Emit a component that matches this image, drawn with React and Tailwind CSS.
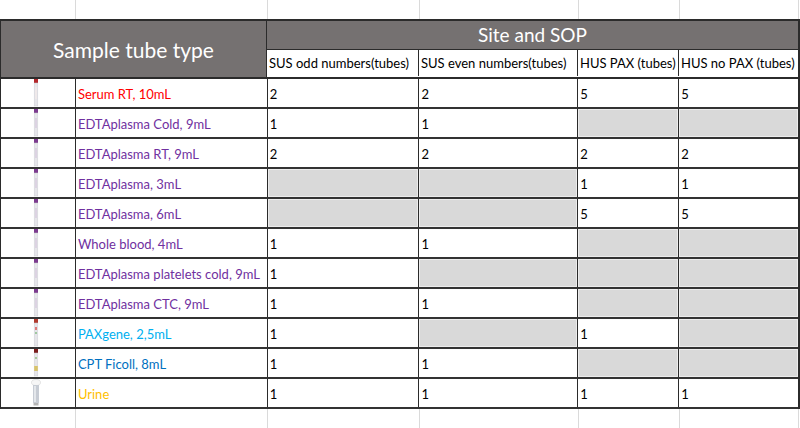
import React from 'react';

const font = { fontFamily: 'Lato, "Open Sans", sans-serif' };

const rows = [
  { name: 'Serum RT, 10mL', color: 'text-[#ff0000]', tube: 'serum', v: ['2', '2', '5', '5'] },
  { name: 'EDTAplasma Cold, 9mL', color: 'text-[#7030a0]', tube: 'edta', v: ['1', '1', null, null] },
  { name: 'EDTAplasma RT, 9mL', color: 'text-[#7030a0]', tube: 'edta', v: ['2', '2', '2', '2'] },
  { name: 'EDTAplasma, 3mL', color: 'text-[#7030a0]', tube: 'edta', v: [null, null, '1', '1'] },
  { name: 'EDTAplasma, 6mL', color: 'text-[#7030a0]', tube: 'edta', v: [null, null, '5', '5'] },
  { name: 'Whole blood, 4mL', color: 'text-[#7030a0]', tube: 'edta', v: ['1', '1', null, null] },
  { name: 'EDTAplasma platelets cold, 9mL', color: 'text-[#7030a0]', tube: 'edta', v: ['1', null, null, null] },
  { name: 'EDTAplasma CTC, 9mL', color: 'text-[#7030a0]', tube: 'edta', v: ['1', '1', null, null] },
  { name: 'PAXgene, 2,5mL', color: 'text-[#00b0f0]', tube: 'pax', v: ['1', null, '1', null] },
  { name: 'CPT Ficoll, 8mL', color: 'text-[#0070c0]', tube: 'cpt', v: ['1', '1', null, null] },
  { name: 'Urine', color: 'text-[#ffc000]', tube: 'urine', v: ['1', '1', '1', '1'] },
];

const widths = ['w-[152px]', 'w-[159px]', 'w-[101px]', 'w-[119px]'];

function Tube({ kind }) {
  if (kind === 'urine') {
    return (
      <svg width="12" height="28" viewBox="0 0 12 28">
        <ellipse cx="6" cy="3.5" rx="4.5" ry="3" fill="#f6f6f6" stroke="#d4d4d4" strokeWidth="0.6" />
        <rect x="3" y="6" width="6" height="18" fill="#c7ccd4" />
        <rect x="4" y="7" width="2" height="16" fill="#e4e7eb" />
        <rect x="3.5" y="24" width="5" height="2.5" fill="#b5b5b5" />
      </svg>
    );
  }
  const cap = { serum: '#b3262a', edta: '#7b3a8e', pax: '#b03a2e', cpt: '#7a1c1c' }[kind];
  return (
    <svg width="8" height="28" viewBox="0 0 8 28">
      <rect x="2" y="0" width="4" height="4" fill={cap} />
      <rect x="2.2" y="4" width="3.6" height="23" fill="#e6e6ea" stroke="#cdcdd3" strokeWidth="0.5" />
      {kind === 'edta' && <rect x="3" y="9" width="2" height="10" fill="#dcd3e2" />}
      {kind === 'serum' && <rect x="3" y="8" width="2" height="12" fill="#efe9ea" />}
      {kind === 'pax' && (
        <>
          <rect x="3" y="8" width="2" height="3" fill="#e07a7a" />
          <rect x="3" y="13" width="2" height="2" fill="#9fc79f" />
        </>
      )}
      {kind === 'cpt' && (
        <>
          <rect x="3" y="8" width="2" height="2" fill="#a8c89a" />
          <rect x="2.2" y="17" width="3.6" height="5" fill="#d8c36a" />
        </>
      )}
    </svg>
  );
}

function SheetRow({ h }) {
  return (
    <div className={`flex ${h}`}>
      <div className="w-[76px] border-r border-[#dadada]" />
      <div className="w-[192px] border-r border-[#dadada]" />
      <div className="w-[152px] border-r border-[#dadada]" />
      <div className="w-[159px] border-r border-[#dadada]" />
      <div className="w-[101px] border-r border-[#dadada]" />
      <div className="w-[119px] border-r border-[#dadada]" />
    </div>
  );
}

export default function App() {
  return (
    <div className="w-[800px] h-[428px] bg-white overflow-hidden text-[13px] text-black" style={font}>
      {/* empty sheet row above */}
      <SheetRow h="h-[19px]" />

      <div className="w-[800px] border-l border-r-2 border-t-2 border-[#2b2b2b]">
        {/* header */}
        <div className="flex border-b-2 border-[#2b2b2b]">
          <div className="w-[267px] h-[56px] bg-[#757171] border-r border-[#2b2b2b] flex items-center justify-center text-white text-[21px] pt-[2px]">
            Sample tube type
          </div>
          <div className="flex-1 flex flex-col">
            <div className="h-[29px] bg-[#757171] border-b border-[#2b2b2b] flex items-center justify-center text-white text-[19px]">
              Site and SOP
            </div>
            <div className="flex h-[26px]">
              {['SUS odd numbers(tubes)', 'SUS even numbers(tubes)', 'HUS PAX (tubes)', 'HUS no PAX (tubes)'].map((h, i) => (
                <div key={h} className={`${widths[i]} ${i < 3 ? 'border-r border-[#2b2b2b]' : ''} flex items-center pl-[2px] pt-[2px] whitespace-nowrap overflow-hidden`}>
                  {h}
                </div>
              ))}
            </div>
          </div>
        </div>

        {/* data rows */}
        {rows.map((r) => (
          <div key={r.name} className="flex h-[30px] border-b-2 border-[#333333]">
            <div className="w-[75px] border-r border-[#2b2b2b] flex items-center justify-center pr-[4px]">
              <Tube kind={r.tube} />
            </div>
            <div className={`w-[192px] border-r border-[#2b2b2b] flex items-center pl-[2px] pt-[3px] whitespace-nowrap ${r.color}`}>
              {r.name}
            </div>
            {r.v.map((val, i) => (
              <div key={i} className={`${widths[i]} ${i < 3 ? 'border-r border-[#2b2b2b]' : ''} flex`}>
                {val === null ? (
                  <div className="flex-1 bg-[#d9d9d9] border border-[#ececec]" />
                ) : (
                  <div className="flex-1 flex items-center pl-[2px] pt-[3px]">{val}</div>
                )}
              </div>
            ))}
          </div>
        ))}
      </div>

      {/* empty sheet row below */}
      <SheetRow h="h-[24px]" />
    </div>
  );
}
